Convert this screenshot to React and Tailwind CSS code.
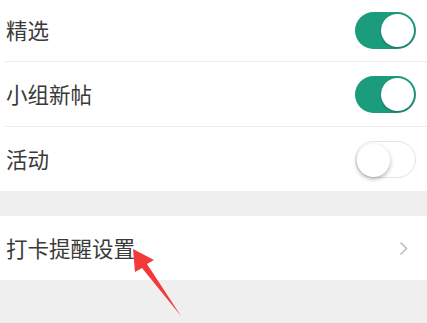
import React from 'react';

const Toggle = ({ on }) => (
    <div
        className={`relative w-[61px] h-[37px] rounded-full ${
            on ? 'bg-[#1b9c7d]' : 'bg-white border border-[#e3e3e3]'
        }`}
    >
        <div
            className={`absolute top-[2px] w-[33px] h-[33px] rounded-full bg-white ${
                on ? 'right-[2px] shadow-[0_1px_2px_rgba(0,0,0,0.3)]' : 'left-[1px] top-[1px] shadow-[0_2px_4px_rgba(0,0,0,0.3)]'
            }`}
        />
    </div>
);

const Row = ({ label, on, h, divider }) => (
    <div className="bg-white">
        <div className={`flex items-center justify-between pl-[6px] pr-[11px] ${h}`}>
            <span className="text-[21.5px] text-[#3a3a3a]">{label}</span>
            <Toggle on={on} />
        </div>
        {divider && <div className="ml-[5px] h-px bg-[#ececec]" />}
    </div>
);

export default function App() {
    return (
        <div
            className="relative w-[427px] h-[323px] overflow-hidden bg-[#efefef]"
            style={{ fontFamily: '"Noto Sans CJK SC", "Noto Sans", sans-serif' }}
        >
            <Row label="精选" on h="h-[61px]" divider />
            <Row label="小组新帖" on h="h-[64px]" divider />
            <Row label="活动" on={false} h="h-[64px]" />

            <div className="h-[25px]" />

            <div className="flex items-center justify-between bg-white h-[64px] pl-[6px] pr-[19px]">
                <span className="text-[21.5px] text-[#3a3a3a]">打卡提醒设置</span>
                <svg width="9" height="15" viewBox="0 0 9 15" fill="none">
                    <path d="M1.5 1.5 L7.5 7.5 L1.5 13.5" stroke="#b5b5b5" strokeWidth="1.4" />
                </svg>
            </div>

            {/* red annotation arrow */}
            <svg className="absolute left-0 top-0" width="427" height="323" viewBox="0 0 427 323">
                <polygon
                    points="133,249 154,260 147,264 181,316 142,268 135,272"
                    fill="#f23a3a"
                />
            </svg>
        </div>
    );
}
